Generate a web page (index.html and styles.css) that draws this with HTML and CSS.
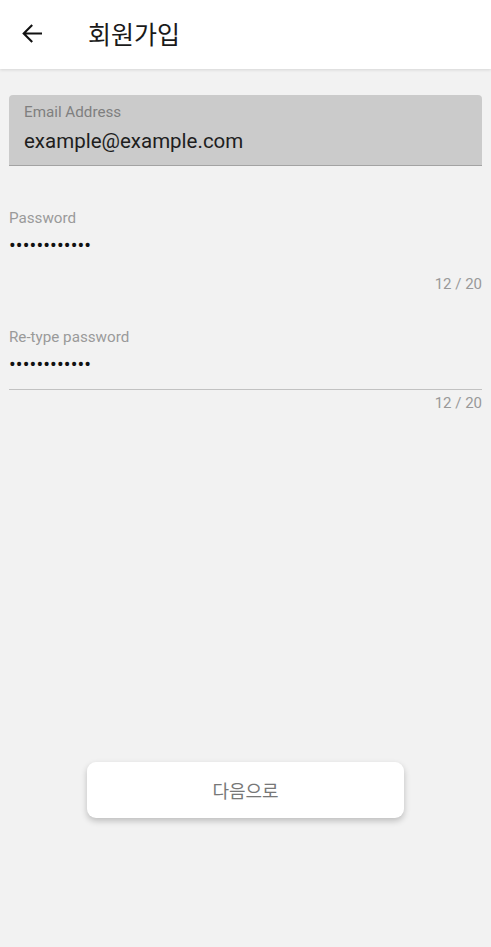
FILE: index.html
```html
<!DOCTYPE html>
<html lang="ko">
<head>
<meta charset="utf-8">
<title>회원가입</title>
<link rel="stylesheet" href="styles.css">
</head>
<body>
<div class="app">
  <header class="appbar">
    <button class="back" aria-label="뒤로">
      <svg width="24" height="24" viewBox="0 0 24 24"><path d="M22 11.5H4M12.2 3L3.7 11.5L12.2 20" fill="none" stroke="#111" stroke-width="2.1"/></svg>
    </button>
    <h1 class="title">회원가입</h1>
  </header>
  <main class="form">
    <div class="field filled">
      <div class="label">Email Address</div>
      <div class="value">example@example.com</div>
    </div>
    <div class="field plain first">
      <div class="label">Password</div>
      <div class="dots">••••••••••••</div>
      <div class="counter">12 / 20</div>
    </div>
    <div class="field plain second">
      <div class="label">Re-type password</div>
      <div class="dots underline">••••••••••••</div>
      <div class="counter">12 / 20</div>
    </div>
    <div class="spacer"></div>
    <div class="actions">
      <button class="next">다음으로</button>
    </div>
  </main>
</div>
</body>
</html>
```
FILE: styles.css
```css
* { box-sizing: border-box; }
html, body { margin: 0; padding: 0; height: 100%; }
body {
  background: #f2f2f2;
  font-family: Roboto, "Noto Sans CJK KR", sans-serif;
}
.app { display: flex; flex-direction: column; min-height: 947px; }
.appbar {
  height: 69px;
  background: #fff;
  display: flex;
  align-items: center;
  box-shadow: 0 1px 3px rgba(0,0,0,0.12);
  position: relative;
  z-index: 1;
}
.back {
  border: 0; background: none; padding: 0;
  width: 24px; height: 24px;
  margin-left: 20px;
  margin-bottom: 2px;
  display: flex;
}
.title {
  margin: 0 0 3px 44px;
  font-family: "Noto Sans CJK KR", sans-serif;
  font-weight: 400;
  font-size: 25px;
  color: #1a1a1a;
  line-height: 1;
}
.form {
  flex: 1;
  display: flex;
  flex-direction: column;
  padding: 26px 9px 0 9px;
}
.field.filled {
  background: #cbcbcb;
  border-radius: 4px 4px 0 0;
  border-bottom: 1px solid #a3a3a3;
  height: 71px;
  padding: 8px 15px 0 15px;
}
.label {
  font-size: 15.2px;
  color: #8a8a8a;
  line-height: 18px;
}
.filled .label { color: #7f7f7f; }
.value {
  font-size: 20.5px;
  color: #1e1e1e;
  line-height: 24px;
  margin-top: 8px;
}
.field.plain .label { color: #9a9a9a; }
.field.first { margin-top: 43px; }
.field.second { margin-top: 35px; }
.dots {
  font-size: 20px;
  letter-spacing: 0.1px;
  color: #111;
  line-height: 18px;
  margin-top: 9px;
  height: 35px;
  border-bottom: 1px solid transparent;
}
.dots.underline { border-bottom-color: #c2c2c2; }
.counter {
  text-align: right;
  font-size: 15px;
  color: #999;
  line-height: 18px;
  margin-top: 4px;
}
.spacer { flex: 0 0 350px; }
.actions { display: flex; justify-content: center; }
.next {
  width: 317px;
  height: 56px;
  background: #fff;
  border: 0;
  border-radius: 9px;
  box-shadow: 0 3px 6px rgba(0,0,0,0.22);
  font-family: "Noto Sans CJK KR", sans-serif;
  font-size: 18px;
  color: #777;
}
```
